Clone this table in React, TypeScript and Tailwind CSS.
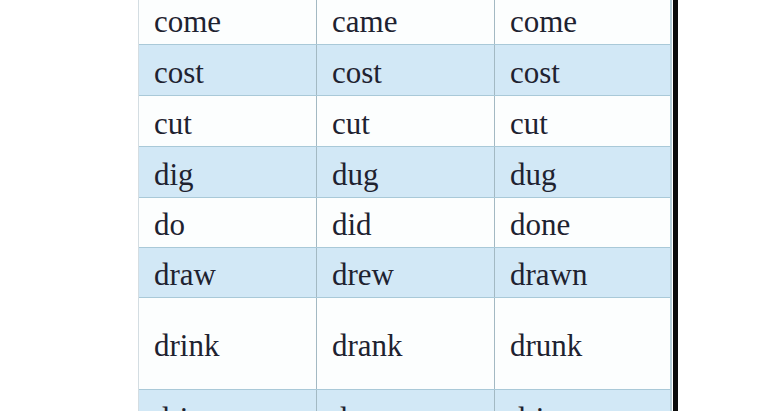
const rows: { words: [string, string, string]; shaded: boolean; h: string }[] = [
  { words: ["come", "came", "come"], shaded: false, h: "h-[51px]" },
  { words: ["cost", "cost", "cost"], shaded: true, h: "h-[51px]" },
  { words: ["cut", "cut", "cut"], shaded: false, h: "h-[51px]" },
  { words: ["dig", "dug", "dug"], shaded: true, h: "h-[51px]" },
  { words: ["do", "did", "done"], shaded: false, h: "h-[50px]" },
  { words: ["draw", "drew", "drawn"], shaded: true, h: "h-[50px]" },
  { words: ["drink", "drank", "drunk"], shaded: false, h: "h-[92px]" },
  { words: ["drive", "drove", "driven"], shaded: true, h: "h-[54px]" },
];

export default function App() {
  return (
    <div className="h-[411px] w-[771px] overflow-hidden bg-white">
      <div className="flex pl-[138px]">
        {/* table of verb forms, top row cut off by the frame */}
        <div
          className="-mt-[6px] w-[534px] border-l border-[#d4dde2] border-r-[2px] border-r-[#b7cfd9] text-[31px] leading-none text-[#1e2230]"
          style={{ fontFamily: '"Liberation Serif", "Times New Roman", serif' }}
        >
          {rows.map((r, i) => (
            <div
              key={i}
              className={`grid grid-cols-[178px_178px_1fr] border-b border-[#a9c9d8] ${r.h} ${
                r.shaded ? "bg-[#d2e8f6]" : "bg-[#fcfefe]"
              }`}
            >
              {r.words.map((w, j) => (
                <div
                  key={j}
                  className={`flex items-center pl-[15px] pt-[4px] ${j < 2 ? "border-r border-[#a3b9c3]" : ""}`}
                >
                  {w}
                </div>
              ))}
            </div>
          ))}
        </div>
        <div className="ml-[1px] h-[411px] w-[5px] bg-[#0b0b0b]" />
      </div>
    </div>
  );
}
